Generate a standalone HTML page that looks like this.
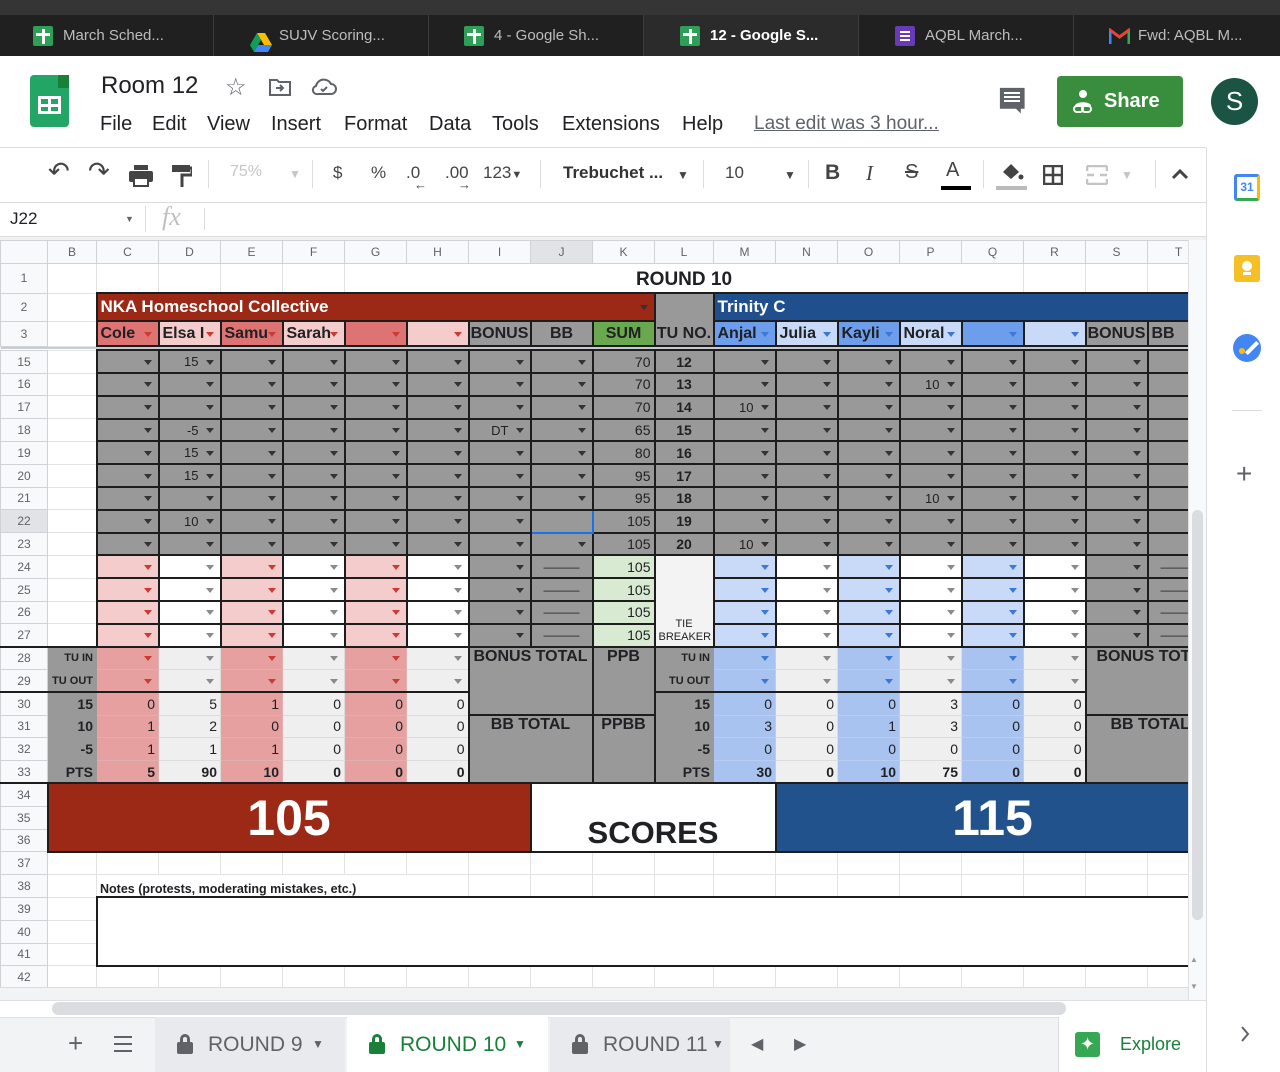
<!DOCTYPE html>
<html><head><meta charset="utf-8">
<style>
*{box-sizing:border-box;margin:0;padding:0}
body{width:1280px;height:1072px;overflow:hidden;background:#fff;font-family:"Liberation Sans",Arial,sans-serif;position:relative;color:#202124}
.ab{position:absolute;white-space:nowrap}
.tab{position:absolute;top:15px;height:41px;width:215px;border-left:1px solid #3c3c3c;color:#bdbdbd;font-size:15px;line-height:41px}
.tab .ic{position:absolute;top:11px;width:20px;height:20px;border-radius:2px}
.sh{background:#2f9e57}
.sh::before{content:"";position:absolute;left:9px;top:3px;width:3px;height:15px;background:#fff}
.sh::after{content:"";position:absolute;left:3px;top:7px;width:14px;height:3px;background:#fff}
.mi{position:absolute;top:113px;font-size:20px;color:#202124}
.tb{position:absolute;top:163px;font-size:17px;color:#444}
.sep{position:absolute;top:160px;width:1px;height:28px;background:#dadce0}
#grid{position:absolute;left:0;top:240px;width:1188px;height:747px;overflow:hidden}
table{border-collapse:collapse;table-layout:fixed;width:1208px}
td,th{border:1px solid #e2e3e3;padding:0 3px;overflow:hidden;white-space:nowrap;font-size:13px;position:relative;height:22.8px}
th{background:#f8f9fa;color:#5f6368;font-weight:normal;font-size:12px;text-align:center;border-color:#d0d3d6}
.g{background:#999;border:2px solid #1d1d1d}
.a{text-align:right;padding-right:21px}
.a::after{content:"";position:absolute;right:6px;top:50%;margin-top:-2px;border-left:4px solid transparent;border-right:4px solid transparent;border-top:5px solid #333}
.r::after{border-top-color:#cc3b33}
.b::after{border-top-color:#3c78d8}
.w::after{border-top-color:#8a8a8a}
.p{background:#f4cccc;border:2px solid #1d1d1d}
.wh{background:#fff;border:2px solid #1d1d1d}
.lb{background:#c9daf8;border:2px solid #1d1d1d}
.rp{background:#e6a0a0;border:1px solid #e0b0b0}
.lg{background:#efefef;border:1px solid #dcdcdc}
.bb{background:#a8c3ef;border:1px solid #b8cdf0}
.lbl{background:#999;border:1px solid #999;text-align:right;font-weight:bold;font-size:11px;padding-right:3px}
.n{text-align:right;font-size:14px;padding-right:3px}
.hb{font-weight:bold;font-size:16px}
.dash{background:#999;border:2px solid #1d1d1d;text-align:center;color:#222;font-size:12px}
.st{position:absolute;top:1017px;height:55px;font-size:21px;line-height:55px;white-space:nowrap;overflow:hidden}
</style></head><body>

<div class="ab" style="left:0;top:0;width:1280px;height:15px;background:#353535"></div>
<div class="ab" style="left:0;top:15px;width:1280px;height:41px;background:#202020"></div>
<div class="tab" style="left:0;border-left:none"><span class="ic sh" style="left:33px"></span><span style="margin-left:63px">March Sched...</span></div>
<div class="tab" style="left:213px"><span class="ic" style="left:36px;top:12px"><svg width="22" height="19" viewBox="0 0 22 19"><path d="M7 0h8l7 12h-8z" fill="#fbbc04"/><path d="M7 0L0 12l4 7 7-12z" fill="#0f9d58"/><path d="M4 19h14l4-7H8z" fill="#4285f4"/></svg></span><span style="margin-left:65px">SUJV Scoring...</span></div>
<div class="tab" style="left:428px"><span class="ic sh" style="left:35px"></span><span style="margin-left:65px">4 - Google Sh...</span></div>
<div class="tab" style="left:643px;background:#2b2b2b;color:#fff;font-weight:bold"><span class="ic sh" style="left:36px"></span><span style="margin-left:66px">12 - Google S...</span></div>
<div class="tab" style="left:858px"><span class="ic" style="left:36px;background:#673ab7"><svg width="20" height="20" style="display:block"><path d="M5 6h10M5 10h10M5 14h10" stroke="#fff" stroke-width="2"/></svg></span><span style="margin-left:66px">AQBL March...</span></div>
<div class="tab" style="left:1073px"><span class="ab" style="left:35px;top:13px;width:21px;height:16px"><svg width="21" height="16" viewBox="0 0 21 16" style="display:block"><path d="M1 16V2l9.5 7L20 2v14" fill="none" stroke="#ea4335" stroke-width="3"/><path d="M1 16V3" stroke="#4285f4" stroke-width="3"/><path d="M20 16V3" stroke="#34a853" stroke-width="3"/></svg></span><span style="margin-left:64px">Fwd: AQBL M...</span></div>

<div class="ab" style="left:30px;top:75px;width:39px;height:52px;background:#23a566;border-radius:4px;clip-path:polygon(0 0,70% 0,100% 25%,100% 100%,0 100%)"></div>
<div class="ab" style="left:58px;top:75px;width:11px;height:13px;background:#188038"></div>
<div class="ab" style="left:38px;top:96px;width:23px;height:18px;border:3px solid #fff;background:linear-gradient(#fff,#fff) 50% 0/3px 100% no-repeat,linear-gradient(#fff,#fff) 0 50%/100% 3px no-repeat"></div>
<div class="ab" style="left:101px;top:72px;font-size:24px;color:#202124">Room 12</div>
<div class="ab" style="left:225px;top:73px;font-size:24px;color:#5f6368">☆</div>
<svg class="ab" style="left:268px;top:77px" width="24" height="20"><path d="M2 3h7l2 2h11v13H2z" fill="none" stroke="#5f6368" stroke-width="2"/><path d="M8 11h7M12 8l3 3-3 3" fill="none" stroke="#5f6368" stroke-width="2"/></svg>
<svg class="ab" style="left:311px;top:78px" width="26" height="18"><path d="M7 16h13a5 5 0 000-10 8 8 0 00-15 2 4 4 0 002 8z" fill="none" stroke="#5f6368" stroke-width="2"/><path d="M10 11l2 2 4-4" fill="none" stroke="#5f6368" stroke-width="2"/></svg>
<div class="mi" style="left:100px">File</div>
<div class="mi" style="left:152px">Edit</div>
<div class="mi" style="left:207px">View</div>
<div class="mi" style="left:271px">Insert</div>
<div class="mi" style="left:344px">Format</div>
<div class="mi" style="left:429px">Data</div>
<div class="mi" style="left:492px">Tools</div>
<div class="mi" style="left:562px">Extensions</div>
<div class="mi" style="left:682px">Help</div>
<div class="mi" style="left:754px;color:#5f6368;text-decoration:underline;font-size:19px">Last edit was 3 hour...</div>
<svg class="ab" style="left:998px;top:86px" width="30" height="30"><path d="M2 2h26v22h-4v5l-5-5H2z" fill="#5f6368" transform="scale(.95)"/><path d="M6 7h16M6 11h16M6 15h16" stroke="#fff" stroke-width="2"/></svg>
<div class="ab" style="left:1057px;top:76px;width:126px;height:51px;background:#388e3c;border-radius:4px;color:#fff;font-size:20px;font-weight:bold;line-height:51px"><svg style="position:absolute;left:14px;top:13px" width="24" height="26"><circle cx="12" cy="5" r="4" fill="#fff"/><path d="M4 17c0-5 16-5 16 0" fill="#fff"/><rect x="3" y="17" width="9" height="6" rx="3" fill="none" stroke="#fff" stroke-width="2"/><rect x="11" y="17" width="9" height="6" rx="3" fill="none" stroke="#fff" stroke-width="2"/></svg><span style="margin-left:47px">Share</span></div>
<div class="ab" style="left:1211px;top:78px;width:47px;height:47px;border-radius:50%;background:#1b5443;color:#fff;font-size:26px;text-align:center;line-height:47px">S</div>

<div class="ab" style="left:0;top:147px;width:1206px;height:1px;background:#dadce0"></div>
<div class="tb" style="left:48px;font-size:26px;top:156px">↶</div>
<div class="tb" style="left:88px;font-size:26px;top:156px">↷</div>
<svg class="ab" style="left:129px;top:165px" width="24" height="22"><rect x="5" y="0" width="14" height="5" fill="#444"/><rect x="0" y="6" width="24" height="11" rx="2" fill="#444"/><rect x="5" y="13" width="14" height="8" fill="#fff" stroke="#444" stroke-width="2"/></svg>
<svg class="ab" style="left:172px;top:165px" width="20" height="22"><rect x="0" y="0" width="18" height="7" fill="#444"/><path d="M18 3h2v7H10v12" fill="none" stroke="#444" stroke-width="3"/></svg>
<div class="sep" style="left:208px"></div>
<div class="tb" style="left:230px;color:#c6c6c6;font-size:16px">75%</div>
<div class="tb" style="left:289px;color:#c6c6c6;font-size:12px;top:167px">▼</div>
<div class="sep" style="left:312px"></div>
<div class="tb" style="left:333px">$</div>
<div class="tb" style="left:371px">%</div>
<div class="tb" style="left:406px">.0</div>
<div class="tb" style="left:414px;top:177px;font-size:13px">←</div>
<div class="tb" style="left:445px">.00</div>
<div class="tb" style="left:458px;top:177px;font-size:13px">→</div>
<div class="tb" style="left:483px">123<span style="font-size:11px">▼</span></div>
<div class="sep" style="left:540px"></div>
<div class="tb" style="left:563px;font-weight:bold;color:#333">Trebuchet ...</div>
<div class="tb" style="left:677px;font-size:12px;top:168px">▼</div>
<div class="sep" style="left:703px"></div>
<div class="tb" style="left:725px">10</div>
<div class="tb" style="left:784px;font-size:12px;top:168px">▼</div>
<div class="sep" style="left:808px"></div>
<div class="tb" style="left:825px;font-weight:bold;font-size:21px;top:161px">B</div>
<div class="tb" style="left:866px;font-style:italic;font-size:21px;top:161px;font-family:'Liberation Serif',serif">I</div>
<div class="tb" style="left:905px;font-size:20px;top:161px;text-decoration:line-through">S</div>
<div class="tb" style="left:946px;font-size:20px;top:159px">A</div>
<div class="ab" style="left:941px;top:186px;width:30px;height:4px;border-top:2px solid #000;border-bottom:2px solid #000"></div>
<div class="sep" style="left:983px"></div>
<svg class="ab" style="left:999px;top:162px" width="26" height="20"><path d="M4 10l8-8 8 8-8 7z" fill="#444"/><circle cx="22" cy="15" r="2.5" fill="#444"/></svg>
<div class="ab" style="left:996px;top:186px;width:31px;height:4px;border-top:2px solid #bbb;border-bottom:2px solid #bbb"></div>
<svg class="ab" style="left:1043px;top:165px" width="20" height="20"><rect x="1" y="1" width="18" height="18" fill="none" stroke="#444" stroke-width="2.5"/><path d="M10 1v18M1 10h18" stroke="#444" stroke-width="2.5"/></svg>
<svg class="ab" style="left:1086px;top:165px" width="22" height="20"><path d="M1 1h20M1 19h20M1 1v5M21 1v5M1 14v5M21 14v5M1 10h7M21 10h-7" stroke="#c4c4c4" stroke-width="2.5" fill="none"/></svg>
<div class="tb" style="left:1121px;font-size:12px;top:168px;color:#c4c4c4">▼</div>
<div class="sep" style="left:1155px"></div>
<svg class="ab" style="left:1171px;top:168px" width="18" height="12"><path d="M2 10l7-7 7 7" stroke="#444" stroke-width="3" fill="none"/></svg>
<div class="ab" style="left:0;top:202px;width:1206px;height:1px;background:#dadce0"></div>
<div class="ab" style="left:10px;top:209px;font-size:17px">J22</div>
<div class="ab" style="left:125px;top:214px;font-size:9px;color:#666">▼</div>
<div class="ab" style="left:145px;top:206px;width:1px;height:26px;background:#dadce0"></div>
<div class="ab" style="left:162px;top:202px;font-size:26px;color:#c0c0c0;font-style:italic;font-family:'Liberation Serif',serif">fx</div>
<div class="ab" style="left:204px;top:208px;width:1px;height:22px;background:#dadce0"></div>
<div class="ab" style="left:0;top:236px;width:1206px;height:4px;background:#f1f1f1;border-top:1px solid #dadce0"></div>

<div class="ab" style="left:1206px;top:148px;width:1px;height:924px;background:#dadce0"></div>
<div class="ab" style="left:1234px;top:174px;width:26px;height:27px;border-radius:3px;background:#fff;border:3px solid #4285f4;border-right-color:#fbbc04;border-bottom-color:#34a853;color:#4285f4;font-size:12px;font-weight:bold;text-align:center;line-height:20px">31</div>
<div class="ab" style="left:1234px;top:255px;width:26px;height:27px;border-radius:3px;background:#f6bf26"><div class="ab" style="left:8px;top:6px;width:10px;height:10px;border-radius:50%;background:#fff"></div><div class="ab" style="left:9px;top:17px;width:8px;height:3px;background:#fff"></div></div>
<div class="ab" style="left:1233px;top:334px;width:28px;height:28px;border-radius:50%;background:#4285f4"><div class="ab" style="left:11px;top:12px;width:16px;height:4px;background:#fff;transform:rotate(-45deg)"></div><div class="ab" style="left:6px;top:14px;width:6px;height:6px;border-radius:50%;background:#fbbc04"></div></div>
<div class="ab" style="left:1232px;top:410px;width:30px;height:1px;background:#dadce0"></div>
<div class="ab" style="left:1236px;top:458px;font-size:28px;color:#5f6368">+</div>

<div id="grid">
<table>
<colgroup><col style="width:47px"><col style="width:49px"><col style="width:62px"><col style="width:62px"><col style="width:62px"><col style="width:62px"><col style="width:62px"><col style="width:62px"><col style="width:62px"><col style="width:62px"><col style="width:62px"><col style="width:59px"><col style="width:62px"><col style="width:62px"><col style="width:62px"><col style="width:62px"><col style="width:62px"><col style="width:62px"><col style="width:62px"><col style="width:62px"></colgroup>
<tr style="height:22px"><th style="height:22px"></th><th>B</th><th>C</th><th>D</th><th>E</th><th>F</th><th>G</th><th>H</th><th>I</th><th style="background:#e1e3e6">J</th><th>K</th><th>L</th><th>M</th><th>N</th><th>O</th><th>P</th><th>Q</th><th>R</th><th>S</th><th>T</th></tr>
<tr><th style="height:30px">1</th><td></td><td></td><td></td><td></td><td></td><td colspan="11" style="text-align:center;font-weight:bold;font-size:19px;padding-top:4px">ROUND 10</td><td></td><td></td><td></td></tr>
<tr><th style="height:28px">2</th><td></td><td colspan="9" class="a" style="background:#9b2915;border:2px solid #1d1d1d;color:#fff;font-weight:bold;font-size:17px;text-align:left;padding-left:3px">NKA Homeschool Collective</td><td rowspan="2" class="g hb" style="vertical-align:bottom;text-align:center;padding:0 0 2px 0">TU NO.</td><td colspan="8" style="background:#1f508d;border:2px solid #1d1d1d;color:#fff;font-weight:bold;font-size:17px">Trinity C</td></tr>
<tr><th style="height:25px">3</th><td></td>
<td class="a r hb" style="background:#dd7373;border:2px solid #1d1d1d;text-align:left">Cole</td>
<td class="a r hb" style="background:#f4cccc;border:2px solid #1d1d1d;text-align:left">Elsa I</td>
<td class="a r hb" style="background:#dd7373;border:2px solid #1d1d1d;text-align:left">Samu</td>
<td class="a r hb" style="background:#f4cccc;border:2px solid #1d1d1d;text-align:left">Sarah</td>
<td class="a r" style="background:#dd7373;border:2px solid #1d1d1d"></td>
<td class="a r" style="background:#f4cccc;border:2px solid #1d1d1d"></td>
<td class="g hb" style="text-align:center;padding:0">BONUS</td><td class="g hb" style="text-align:center">BB</td><td class="hb" style="background:#6aa84f;border:2px solid #1d1d1d;text-align:center">SUM</td>
<td class="a b hb" style="background:#6d9eeb;border:2px solid #1d1d1d;text-align:left">Anjal</td>
<td class="a b hb" style="background:#c9daf8;border:2px solid #1d1d1d;text-align:left">Julia</td>
<td class="a b hb" style="background:#6d9eeb;border:2px solid #1d1d1d;text-align:left">Kayli</td>
<td class="a b hb" style="background:#c9daf8;border:2px solid #1d1d1d;text-align:left">Noral</td>
<td class="a b" style="background:#6d9eeb;border:2px solid #1d1d1d"></td>
<td class="a b" style="background:#c9daf8;border:2px solid #1d1d1d"></td>
<td class="g hb" style="text-align:center;padding:0">BONUS</td><td class="g hb">BB</td></tr>
<tr><td colspan="20" style="height:4px;padding:0;background:#c8ccd1;border:none"></td></tr>
<tr><th>15</th><td></td><td class="g a"></td><td class="g a">15</td><td class="g a"></td><td class="g a"></td><td class="g a"></td><td class="g a"></td><td class="g a"></td><td class="g a"></td><td class="g n">70</td><td class="g hb" style="text-align:center;font-size:14px">12</td><td class="g a"></td><td class="g a"></td><td class="g a"></td><td class="g a"></td><td class="g a"></td><td class="g a"></td><td class="g a"></td><td class="g"></td></tr>
<tr><th>16</th><td></td><td class="g a"></td><td class="g a"></td><td class="g a"></td><td class="g a"></td><td class="g a"></td><td class="g a"></td><td class="g a"></td><td class="g a"></td><td class="g n">70</td><td class="g hb" style="text-align:center;font-size:14px">13</td><td class="g a"></td><td class="g a"></td><td class="g a"></td><td class="g a">10</td><td class="g a"></td><td class="g a"></td><td class="g a"></td><td class="g"></td></tr>
<tr><th>17</th><td></td><td class="g a"></td><td class="g a"></td><td class="g a"></td><td class="g a"></td><td class="g a"></td><td class="g a"></td><td class="g a"></td><td class="g a"></td><td class="g n">70</td><td class="g hb" style="text-align:center;font-size:14px">14</td><td class="g a">10</td><td class="g a"></td><td class="g a"></td><td class="g a"></td><td class="g a"></td><td class="g a"></td><td class="g a"></td><td class="g"></td></tr>
<tr><th>18</th><td></td><td class="g a"></td><td class="g a">-5</td><td class="g a"></td><td class="g a"></td><td class="g a"></td><td class="g a"></td><td class="g a">DT</td><td class="g a"></td><td class="g n">65</td><td class="g hb" style="text-align:center;font-size:14px">15</td><td class="g a"></td><td class="g a"></td><td class="g a"></td><td class="g a"></td><td class="g a"></td><td class="g a"></td><td class="g a"></td><td class="g"></td></tr>
<tr><th>19</th><td></td><td class="g a"></td><td class="g a">15</td><td class="g a"></td><td class="g a"></td><td class="g a"></td><td class="g a"></td><td class="g a"></td><td class="g a"></td><td class="g n">80</td><td class="g hb" style="text-align:center;font-size:14px">16</td><td class="g a"></td><td class="g a"></td><td class="g a"></td><td class="g a"></td><td class="g a"></td><td class="g a"></td><td class="g a"></td><td class="g"></td></tr>
<tr><th>20</th><td></td><td class="g a"></td><td class="g a">15</td><td class="g a"></td><td class="g a"></td><td class="g a"></td><td class="g a"></td><td class="g a"></td><td class="g a"></td><td class="g n">95</td><td class="g hb" style="text-align:center;font-size:14px">17</td><td class="g a"></td><td class="g a"></td><td class="g a"></td><td class="g a"></td><td class="g a"></td><td class="g a"></td><td class="g a"></td><td class="g"></td></tr>
<tr><th>21</th><td></td><td class="g a"></td><td class="g a"></td><td class="g a"></td><td class="g a"></td><td class="g a"></td><td class="g a"></td><td class="g a"></td><td class="g a"></td><td class="g n">95</td><td class="g hb" style="text-align:center;font-size:14px">18</td><td class="g a"></td><td class="g a"></td><td class="g a"></td><td class="g a">10</td><td class="g a"></td><td class="g a"></td><td class="g a"></td><td class="g"></td></tr>
<tr><th style="background:#e1e3e6">22</th><td></td><td class="g a"></td><td class="g a">10</td><td class="g a"></td><td class="g a"></td><td class="g a"></td><td class="g a"></td><td class="g a"></td><td class="g" style="border:2px solid #1a73e8"></td><td class="g n">105</td><td class="g hb" style="text-align:center;font-size:14px">19</td><td class="g a"></td><td class="g a"></td><td class="g a"></td><td class="g a"></td><td class="g a"></td><td class="g a"></td><td class="g a"></td><td class="g"></td></tr>
<tr><th>23</th><td></td><td class="g a"></td><td class="g a"></td><td class="g a"></td><td class="g a"></td><td class="g a"></td><td class="g a"></td><td class="g a"></td><td class="g a"></td><td class="g n">105</td><td class="g hb" style="text-align:center;font-size:14px">20</td><td class="g a">10</td><td class="g a"></td><td class="g a"></td><td class="g a"></td><td class="g a"></td><td class="g a"></td><td class="g a"></td><td class="g"></td></tr>
<tr><th>24</th><td></td><td class="p a r"></td><td class="wh a w"></td><td class="p a r"></td><td class="wh a w"></td><td class="p a r"></td><td class="wh a w"></td><td class="g a"></td><td class="dash">———</td><td class="n" style="background:#d9ead3;border:2px solid #1d1d1d">105</td><td rowspan="4" style="background:#f3f3f3;border:2px solid #1d1d1d;text-align:center;vertical-align:bottom;font-size:11px;line-height:13px;padding-bottom:2px">TIE<br>BREAKER</td><td class="lb a b"></td><td class="wh a w"></td><td class="lb a b"></td><td class="wh a w"></td><td class="lb a b"></td><td class="wh a w"></td><td class="g a"></td><td class="dash">———</td></tr>
<tr><th>25</th><td></td><td class="p a r"></td><td class="wh a w"></td><td class="p a r"></td><td class="wh a w"></td><td class="p a r"></td><td class="wh a w"></td><td class="g a"></td><td class="dash">———</td><td class="n" style="background:#d9ead3;border:2px solid #1d1d1d">105</td><td class="lb a b"></td><td class="wh a w"></td><td class="lb a b"></td><td class="wh a w"></td><td class="lb a b"></td><td class="wh a w"></td><td class="g a"></td><td class="dash">———</td></tr>
<tr><th>26</th><td></td><td class="p a r"></td><td class="wh a w"></td><td class="p a r"></td><td class="wh a w"></td><td class="p a r"></td><td class="wh a w"></td><td class="g a"></td><td class="dash">———</td><td class="n" style="background:#d9ead3;border:2px solid #1d1d1d">105</td><td class="lb a b"></td><td class="wh a w"></td><td class="lb a b"></td><td class="wh a w"></td><td class="lb a b"></td><td class="wh a w"></td><td class="g a"></td><td class="dash">———</td></tr>
<tr><th>27</th><td></td><td class="p a r"></td><td class="wh a w"></td><td class="p a r"></td><td class="wh a w"></td><td class="p a r"></td><td class="wh a w"></td><td class="g a"></td><td class="dash">———</td><td class="n" style="background:#d9ead3;border:2px solid #1d1d1d">105</td><td class="lb a b"></td><td class="wh a w"></td><td class="lb a b"></td><td class="wh a w"></td><td class="lb a b"></td><td class="wh a w"></td><td class="g a"></td><td class="dash">———</td></tr>
<tr style="border-top:2px solid #1d1d1d"><th>28</th><td class="lbl">TU IN</td><td class="rp a r"></td><td class="lg a w"></td><td class="rp a r"></td><td class="lg a w"></td><td class="rp a r"></td><td class="lg a w"></td><td colspan="2" rowspan="3" class="g hb" style="vertical-align:top;text-align:center;border-right:2px solid #1d1d1d">BONUS TOTAL</td><td rowspan="3" class="g hb" style="vertical-align:top;text-align:center">PPB</td><td class="lbl" style="border-left:2px solid #1d1d1d">TU IN</td><td class="bb a b"></td><td class="lg a w"></td><td class="bb a b"></td><td class="lg a w"></td><td class="bb a b"></td><td class="lg a w"></td><td colspan="2" rowspan="3" class="g hb" style="vertical-align:top;padding-left:10px">BONUS TOTAL</td></tr>
<tr><th>29</th><td class="lbl">TU OUT</td><td class="rp a r"></td><td class="lg a w"></td><td class="rp a r"></td><td class="lg a w"></td><td class="rp a r"></td><td class="lg a w"></td><td class="lbl" style="border-left:2px solid #1d1d1d">TU OUT</td><td class="bb a b"></td><td class="lg a w"></td><td class="bb a b"></td><td class="lg a w"></td><td class="bb a b"></td><td class="lg a w"></td></tr>
<tr style="border-top:2px solid #1d1d1d"><th>30</th><td class="lbl hb n" style="font-size:14px">15</td><td class="rp n">0</td><td class="lg n">5</td><td class="rp n">1</td><td class="lg n">0</td><td class="rp n">0</td><td class="lg n">0</td><td class="lbl n" style="font-size:14px;border-left:2px solid #1d1d1d">15</td><td class="bb n">0</td><td class="lg n">0</td><td class="bb n">0</td><td class="lg n">3</td><td class="bb n">0</td><td class="lg n">0</td></tr>
<tr><th>31</th><td class="lbl n" style="font-size:14px">10</td><td class="rp n">1</td><td class="lg n">2</td><td class="rp n">0</td><td class="lg n">0</td><td class="rp n">0</td><td class="lg n">0</td><td colspan="2" rowspan="3" class="g hb" style="vertical-align:top;text-align:center;border-top:2px solid #1d1d1d">BB TOTAL</td><td rowspan="3" class="g hb" style="vertical-align:top;text-align:center;border-top:2px solid #1d1d1d">PPBB</td><td class="lbl n" style="font-size:14px;border-left:2px solid #1d1d1d">10</td><td class="bb n">3</td><td class="lg n">0</td><td class="bb n">1</td><td class="lg n">3</td><td class="bb n">0</td><td class="lg n">0</td><td colspan="2" rowspan="3" class="g hb" style="vertical-align:top;padding-left:24px;border-top:2px solid #1d1d1d">BB TOTAL</td></tr>
<tr><th>32</th><td class="lbl n" style="font-size:14px">-5</td><td class="rp n">1</td><td class="lg n">1</td><td class="rp n">1</td><td class="lg n">0</td><td class="rp n">0</td><td class="lg n">0</td><td class="lbl n" style="font-size:14px;border-left:2px solid #1d1d1d">-5</td><td class="bb n">0</td><td class="lg n">0</td><td class="bb n">0</td><td class="lg n">0</td><td class="bb n">0</td><td class="lg n">0</td></tr>
<tr style="font-weight:bold"><th style="font-weight:normal">33</th><td class="lbl n" style="font-size:14px">PTS</td><td class="rp n"><b>5</b></td><td class="lg n"><b>90</b></td><td class="rp n"><b>10</b></td><td class="lg n"><b>0</b></td><td class="rp n"><b>0</b></td><td class="lg n"><b>0</b></td><td class="lbl n" style="font-size:14px;border-left:2px solid #1d1d1d">PTS</td><td class="bb n"><b>30</b></td><td class="lg n"><b>0</b></td><td class="bb n"><b>10</b></td><td class="lg n"><b>75</b></td><td class="bb n"><b>0</b></td><td class="lg n"><b>0</b></td></tr>
<tr style="border-top:2px solid #1d1d1d"><th>34</th><td colspan="8" rowspan="3" style="background:#9b2915;color:#fff;font-weight:bold;font-size:50px;text-align:center;border:2px solid #1d1d1d;border-top:none">105</td><td colspan="4" rowspan="3" style="background:#fff;font-weight:bold;font-size:31px;text-align:center;vertical-align:bottom;border:2px solid #1d1d1d;border-top:none;padding-bottom:0">SCORES</td><td colspan="7" rowspan="3" style="background:#21528c;color:#fff;font-weight:bold;font-size:50px;text-align:center;border:2px solid #1d1d1d;border-top:none">115</td></tr>
<tr><th>35</th></tr>
<tr><th>36</th></tr>
<tr><th>37</th><td></td><td></td><td></td><td></td><td></td><td></td><td></td><td></td><td></td><td></td><td></td><td></td><td></td><td></td><td></td><td></td><td></td><td></td><td></td></tr>
<tr><th>38</th><td></td><td colspan="6" style="font-weight:bold;font-size:12.5px;vertical-align:bottom;border-bottom:2px solid #1d1d1d">Notes (protests, moderating mistakes, etc.)</td><td style="border-bottom:2px solid #1d1d1d"></td><td style="border-bottom:2px solid #1d1d1d"></td><td style="border-bottom:2px solid #1d1d1d"></td><td style="border-bottom:2px solid #1d1d1d"></td><td style="border-bottom:2px solid #1d1d1d"></td><td style="border-bottom:2px solid #1d1d1d"></td><td style="border-bottom:2px solid #1d1d1d"></td><td style="border-bottom:2px solid #1d1d1d"></td><td style="border-bottom:2px solid #1d1d1d"></td><td style="border-bottom:2px solid #1d1d1d"></td><td style="border-bottom:2px solid #1d1d1d"></td><td style="border-bottom:2px solid #1d1d1d"></td></tr>
<tr><th>39</th><td style="border-right:2px solid #1d1d1d"></td><td colspan="18" rowspan="3" style="border:2px solid #1d1d1d;background:#fff"></td></tr>
<tr><th>40</th><td style="border-right:2px solid #1d1d1d"></td></tr>
<tr><th>41</th><td style="border-right:2px solid #1d1d1d"></td></tr>
<tr><th>42</th><td></td><td style="border-top:2px solid #1d1d1d"></td><td style="border-top:2px solid #1d1d1d"></td><td style="border-top:2px solid #1d1d1d"></td><td style="border-top:2px solid #1d1d1d"></td><td style="border-top:2px solid #1d1d1d"></td><td style="border-top:2px solid #1d1d1d"></td><td style="border-top:2px solid #1d1d1d"></td><td style="border-top:2px solid #1d1d1d"></td><td style="border-top:2px solid #1d1d1d"></td><td style="border-top:2px solid #1d1d1d"></td><td style="border-top:2px solid #1d1d1d"></td><td style="border-top:2px solid #1d1d1d"></td><td style="border-top:2px solid #1d1d1d"></td><td style="border-top:2px solid #1d1d1d"></td><td style="border-top:2px solid #1d1d1d"></td><td style="border-top:2px solid #1d1d1d"></td><td style="border-top:2px solid #1d1d1d"></td><td style="border-top:2px solid #1d1d1d"></td></tr>
</table>
</div>
<div class="ab" style="left:1188px;top:240px;width:18px;height:760px;background:#f8f9fa;border-left:1px solid #e0e0e0"></div>
<div class="ab" style="left:1192px;top:510px;width:11px;height:410px;border-radius:6px;background:#dadce0"></div>
<div class="ab" style="left:1190px;top:955px;font-size:8px;color:#999">▲</div>
<div class="ab" style="left:1190px;top:982px;font-size:8px;color:#999">▼</div>
<div class="ab" style="left:0;top:987px;width:1188px;height:13px;background:#f1f3f4;border-top:1px solid #dadce0"></div>
<div class="ab" style="left:0;top:1000px;width:1206px;height:17px;background:#fff;border-top:1px solid #e0e0e0"></div>
<div class="ab" style="left:52px;top:1002px;width:1014px;height:13px;border-radius:7px;background:#dadce0"></div>
<div class="ab" style="left:0;top:1017px;width:1206px;height:55px;background:#f1f3f4;border-top:1px solid #e0e0e0"></div>
<div class="ab" style="left:68px;top:1028px;font-size:26px;color:#5f6368">+</div>
<div class="ab" style="left:114px;top:1036px;width:18px;height:16px;border-top:2px solid #5f6368;border-bottom:2px solid #5f6368"><div style="margin-top:5px;height:2px;background:#5f6368"></div></div>
<div class="st" style="left:155px;width:190px;background:#e8eaed;color:#5f6368"><span style="position:absolute;left:22px;top:17px;width:16px;height:20px;"><span class="ab" style="left:3px;top:0;width:10px;height:10px;border:3px solid #5f6368;border-bottom:none;border-radius:5px 5px 0 0"></span><span class="ab" style="left:0;top:8px;width:16px;height:12px;background:#5f6368;border-radius:2px"></span></span><span style="position:absolute;left:53px">ROUND 9</span><span style="position:absolute;left:157px;font-size:12px">▼</span></div>
<div class="st" style="left:347px;width:201px;background:#fff;color:#188038"><span style="position:absolute;left:22px;top:17px;width:16px;height:20px;"><span class="ab" style="left:3px;top:0;width:10px;height:10px;border:3px solid #188038;border-bottom:none;border-radius:5px 5px 0 0"></span><span class="ab" style="left:0;top:8px;width:16px;height:12px;background:#188038;border-radius:2px"></span></span><span style="position:absolute;left:53px">ROUND 10</span><span style="position:absolute;left:167px;font-size:12px">▼</span></div>
<div class="st" style="left:550px;width:180px;background:#e8eaed;color:#5f6368"><span style="position:absolute;left:22px;top:17px;width:16px;height:20px;"><span class="ab" style="left:3px;top:0;width:10px;height:10px;border:3px solid #5f6368;border-bottom:none;border-radius:5px 5px 0 0"></span><span class="ab" style="left:0;top:8px;width:16px;height:12px;background:#5f6368;border-radius:2px"></span></span><span style="position:absolute;left:53px">ROUND 11</span><span style="position:absolute;left:162px;font-size:12px">▼</span></div>
<div class="ab" style="left:751px;top:1034px;font-size:16px;color:#5f6368">◀</div>
<div class="ab" style="left:794px;top:1034px;font-size:16px;color:#5f6368">▶</div>
<div class="ab" style="left:1058px;top:1017px;width:148px;height:55px;background:#fff;border-left:1px solid #dadce0"><div class="ab" style="left:16px;top:15px;width:25px;height:25px;background:#34a853;border-radius:3px;color:#fff;text-align:center;font-size:18px;line-height:25px">✦</div><div class="ab" style="left:61px;top:17px;font-size:18px;color:#188038">Explore</div></div>
<svg class="ab" style="left:1239px;top:1025px" width="12" height="18"><path d="M3 2l6 7-6 7" stroke="#5f6368" stroke-width="2" fill="none"/></svg>
</body></html>
